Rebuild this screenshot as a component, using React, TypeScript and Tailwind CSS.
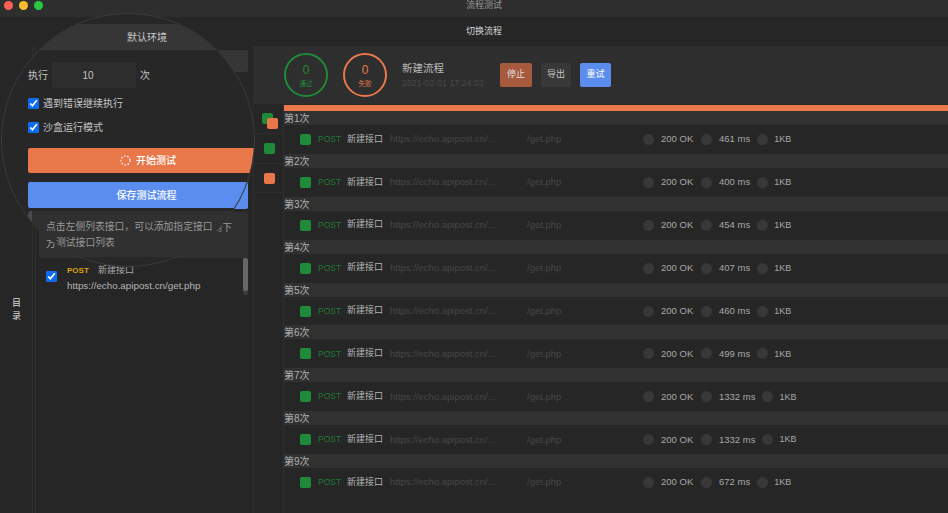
const font = "font-['Liberation_Sans','Noto_Sans_CJK_SC',sans-serif]";

const runs = [
  { ms: "461 ms" },
  { ms: "400 ms" },
  { ms: "454 ms" },
  { ms: "407 ms" },
  { ms: "460 ms" },
  { ms: "499 ms" },
  { ms: "1332 ms" },
  { ms: "1332 ms" },
  { ms: "672 ms" },
];

function Dot() {
  return <span className="w-[11px] h-[11px] rounded-full bg-[#383838] shrink-0" />;
}

function RunRow({ index, ms }: { index: number; ms: string }) {
  return (
    <div>
      <div className="h-[14px] bg-[#313131] text-[10px] leading-[15px] text-[#b0b0b0]">第{index}次</div>
      <div className="h-[28.9px] flex items-center text-[9px]">
        <span className="ml-[16px] w-[11px] h-[11px] rounded-[2px] bg-[#1f8a3a] shrink-0" />
        <span className="ml-[7px] w-[29px] text-[8.5px] text-[#1f7a35]">POST</span>
        <span className="w-[43px] text-[#b5b5b5]">新建接口</span>
        <span className="w-[137px] text-[#464646] text-[9.5px]">https://echo.apipost.cn/…</span>
        <span className="w-[116px] text-[#464646] text-[9.5px]">/get.php</span>
        <Dot />
        <span className="ml-[7px] w-[40px] text-[#a8a8a8] text-[9.5px]">200 OK</span>
        <Dot />
        <span className="ml-[7px] mr-[7px] text-[#a8a8a8] text-[9.5px]">{ms}</span>
        <Dot />
        <span className="ml-[6px] pt-[1px] text-[#a8a8a8] text-[9px]">1KB</span>
      </div>
    </div>
  );
}

function Check({ label }: { label: string }) {
  return (
    <label className="flex items-center h-[12px] text-[10px] text-[#c4c4c4]">
      <input type="checkbox" defaultChecked className="w-[11px] h-[11px] m-0 accent-[#0a6cf5]" />
      <span className="ml-[4px]">{label}</span>
    </label>
  );
}

function Spinner() {
  return (
    <svg width="11" height="11" viewBox="0 0 11 11" fill="none" className="mr-[5px]">
      <circle cx="5.5" cy="5.5" r="4.5" stroke="#fff" strokeWidth="1.2" strokeDasharray="1.6 1.6" />
    </svg>
  );
}

function Lens() {
  return (
    <div className="absolute left-[1px] top-[13px] w-[254px] h-[254px] rounded-full overflow-hidden border border-[#3b3b3b] bg-[#272727] z-10">
      <div className="mt-[10px] h-[26px] bg-[#363636] pl-[38px] flex items-center justify-center text-[10px] text-[#c8c8c8]">
        默认环境
      </div>
      <div className="pl-[26px]">
        <div className="mt-[12px] h-[26px] flex items-center text-[10px] text-[#c4c4c4]">
          <span className="w-[24px]">执行</span>
          <span className="w-[84px] h-[26px] rounded-[2px] bg-[#2d2d2d] flex items-center justify-center pr-[12px]">10</span>
          <span className="ml-[4px]">次</span>
        </div>
        <div className="mt-[9px]">
          <Check label="遇到错误继续执行" />
        </div>
        <div className="mt-[12px]">
          <Check label="沙盒运行模式" />
        </div>
        <button className="mt-[15px] w-[240px] h-[25px] rounded-[2px] bg-[#e8784a] flex items-center justify-center text-[10px] font-medium text-white">
          <Spinner />
          开始测试
        </button>
        <button className="mt-[9px] w-[240px] h-[26px] rounded-[2px] bg-[#5b8def] flex items-center justify-center pr-[3px] text-[10px] font-medium text-white">
          保存测试流程
        </button>
        <div className="mt-[3px] w-[240px] h-[46px] rounded-[3px] bg-[#303030] border-l-[4px] border-[#454b52] pl-[14px] pt-[8px] text-[9.8px] leading-[15.5px] text-[#999] whitespace-nowrap">
          <div>点击左侧列表接口，可以添加指定接口</div>
          <div className="pl-[10px]">测试接口列表</div>
        </div>
      </div>
    </div>
  );
}

function LeftPanel() {
  return (
    <div className="w-[218px] border-r border-[#2e2e2e] pl-[3px] pr-[5px] pt-[4px] flex flex-col">
      <div className="h-[22px] rounded-[2px] bg-[#363636]" />
      <div className="mt-[110px] h-[27px] rounded-[2px] bg-[#5b8def]" />
      {/* only the ends of the hint stick out from under the lens */}
      <div className="mt-[3px] h-[46px] rounded-[3px] bg-[#303030] pl-[7px] pr-[16px] pt-[8px] text-[10px] leading-[15.5px] text-[#999]">
        <div className="text-right">到下</div>
        <div>方</div>
      </div>
      <div className="flex">
        <div className="flex-1 flex pl-[7px] pt-[7px]">
          <input type="checkbox" defaultChecked className="w-[11px] h-[11px] m-0 mt-[6px] accent-[#0a6cf5]" />
          <div className="ml-[10px]">
            <div className="flex items-center h-[12px] text-[9px]">
              <span className="w-[31px] text-[8px] font-bold text-[#d9a010]">POST</span>
              <span className="text-[#aaa]">新建接口</span>
            </div>
            <div className="mt-[2px] text-[9.8px] text-[#b5b5b5]">https://echo.apipost.cn/get.php</div>
          </div>
        </div>
        <div className="w-[5px] h-[37px] rounded-[2px] bg-[#3a3a3a]">
          <div className="h-[33px] rounded-[2px] bg-[#666]" />
        </div>
      </div>
    </div>
  );
}

function StatCircle({ color, label, ring }: { color: string; label: string; ring: string }) {
  return (
    <div className={`w-[44px] h-[44px] rounded-full border-2 ${ring} flex flex-col items-center justify-center ${color}`}>
      <span className="text-[12px] leading-[14px]">0</span>
      <span className="text-[6.5px] leading-[9px] mt-[2px]">{label}</span>
    </div>
  );
}

function Header() {
  return (
    <div className="h-[58px] bg-[#2e2e2e] flex items-center pl-[30px]">
      <StatCircle label="通过" color="text-[#1f8a3a]" ring="border-[#1f8a3a]" />
      <div className="ml-[15px]">
        <StatCircle label="失败" color="text-[#e8784a]" ring="border-[#e8784a]" />
      </div>
      <div className="ml-[15px] w-[98px]">
        <div className="text-[10.5px] leading-[14px] text-[#bbb]">新建流程</div>
        <div className="mt-[2px] text-[8.8px] leading-[12px] text-[#484848] whitespace-nowrap">2021-02-01 17:24:03</div>
      </div>
      <button className="w-[32px] h-[24px] rounded-[2px] bg-[#a85a3e] text-[9px] text-[#e0e0e0]">停止</button>
      <button className="ml-[9px] w-[30px] h-[24px] rounded-[2px] bg-[#383838] text-[9px] text-[#c8c8c8]">导出</button>
      <button className="ml-[9px] w-[31px] h-[24px] rounded-[2px] bg-[#5b8def] text-[9px] text-white">重试</button>
    </div>
  );
}

function SideMarks() {
  return (
    <div className="w-[30px] border-r border-[#2e2e2e] shrink-0">
      <div className="relative h-[30px] border-b border-[#2e2e2e]">
        <span className="absolute left-[8px] top-[9px] w-[11px] h-[11px] rounded-[2px] bg-[#1f8a3a]" />
        <span className="absolute left-[13px] top-[14px] w-[11px] h-[11px] rounded-[2px] bg-[#e8784a]" />
      </div>
      <div className="h-[30px] border-b border-[#2e2e2e] flex items-center pl-[10px]">
        <span className="w-[11px] h-[11px] rounded-[2px] bg-[#1f8a3a]" />
      </div>
      <div className="h-[29px] border-b border-[#2e2e2e] flex items-center pl-[10px]">
        <span className="w-[11px] h-[11px] rounded-[2px] bg-[#e8784a]" />
      </div>
    </div>
  );
}

export default function App() {
  return (
    <div className={`relative w-[948px] h-[513px] overflow-hidden bg-[#262626] flex flex-col ${font}`}>
      {/* title bar */}
      <div className="relative h-[17px] shrink-0 bg-[#2e2e2e] flex items-center justify-center text-[9px] text-[#9a9a9a]">
        <div className="absolute left-[4px] top-[1px] flex gap-[6px]">
          <span className="w-[9px] h-[9px] rounded-full bg-[#ff5f57]" />
          <span className="w-[9px] h-[9px] rounded-full bg-[#febc2e]" />
          <span className="w-[9px] h-[9px] rounded-full bg-[#28c840]" />
        </div>
        <span className="pl-[20px] pb-[5px]">流程测试</span>
      </div>

      {/* tab bar */}
      <div className="h-[29px] shrink-0 flex items-center justify-center pl-[20px] text-[9px] text-[#d8d8d8]">切换流程</div>

      <div className="flex flex-1 min-h-0">
        {/* catalog rail */}
        <div className="w-[33px] border-r border-[#2e2e2e] flex flex-col items-center pt-[251px] pl-[1px] text-[9px] leading-[13px] text-[#ddd]">
          <span>目</span>
          <span>录</span>
        </div>
        <div className="w-[3px] border-r border-[#2e2e2e]" />

        <LeftPanel />

        <div className="flex-1 min-w-0 flex flex-col">
          <Header />
          <div className="flex flex-1 min-h-0">
            <SideMarks />
            <div className="flex-1 min-w-0 pt-[1px]">
              <div className="h-[6px] bg-[#e8784a]" />
              {runs.map((r, i) => (
                <RunRow key={i} index={i + 1} ms={r.ms} />
              ))}
            </div>
          </div>
        </div>
      </div>

      <Lens />
    </div>
  );
}
